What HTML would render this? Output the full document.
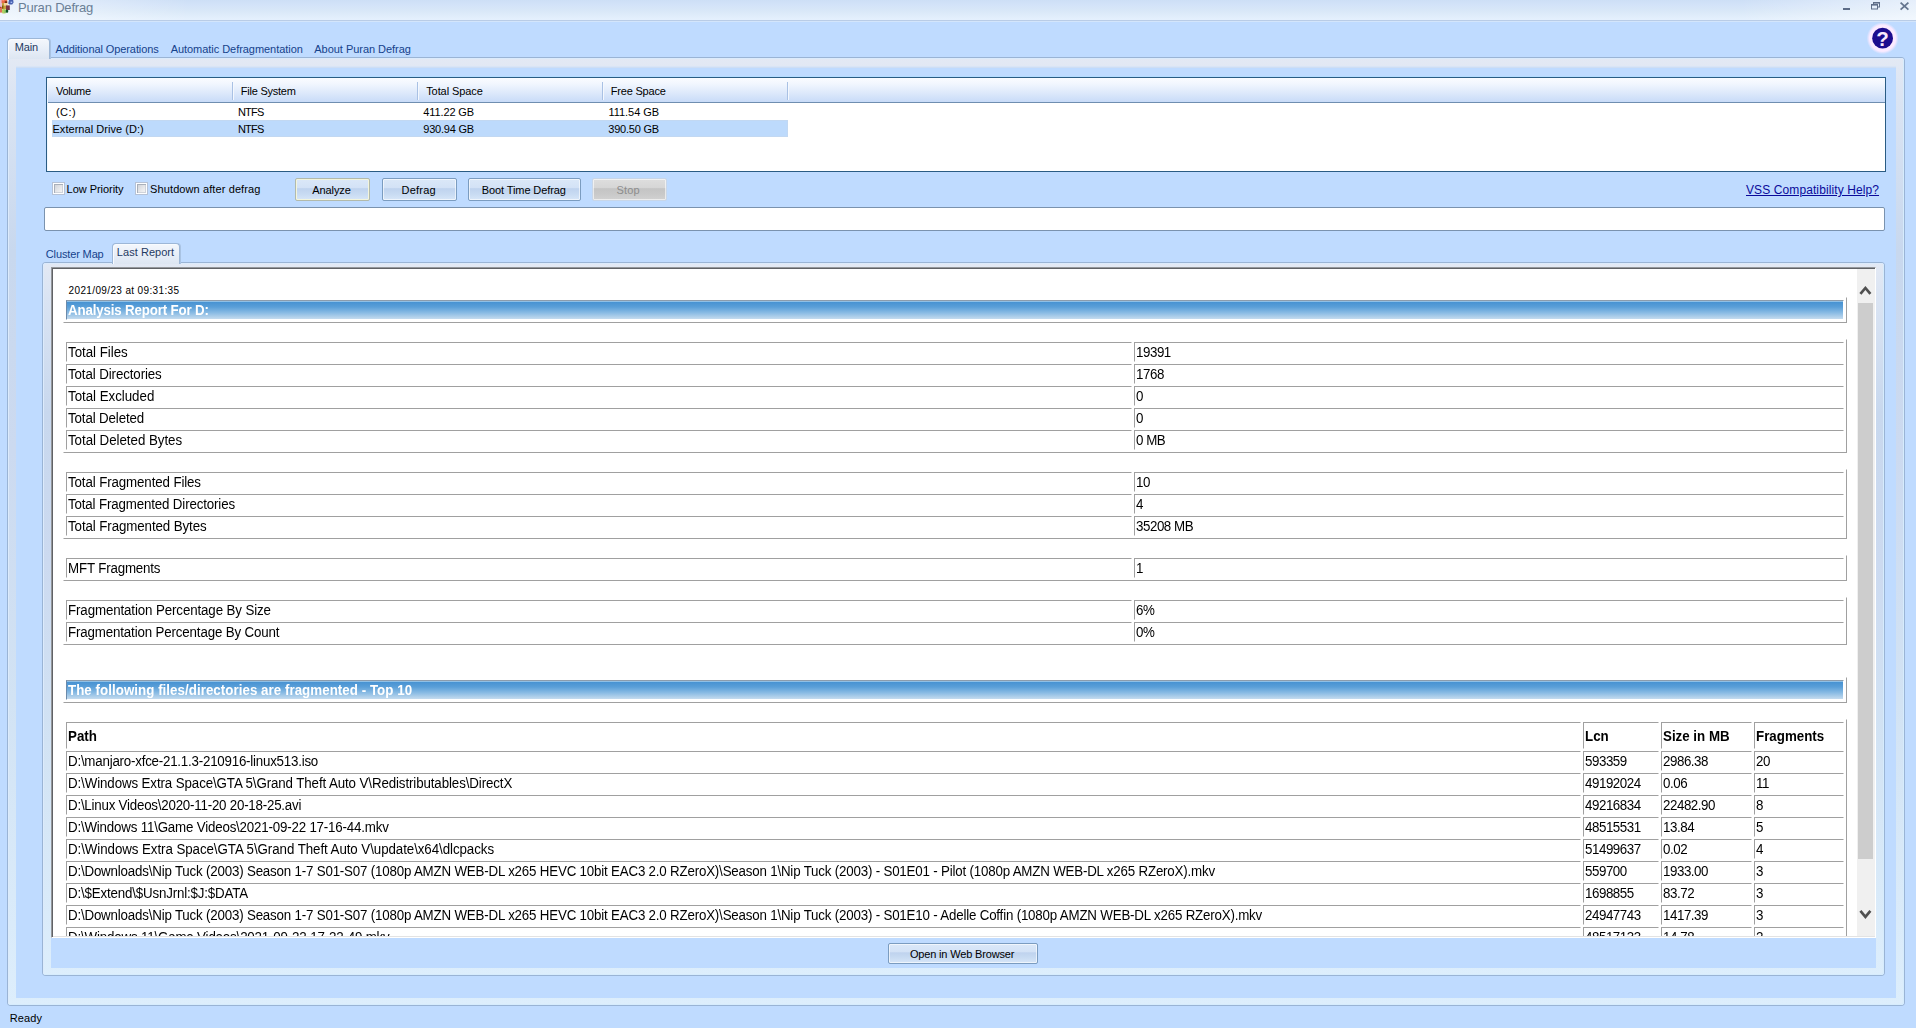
<!DOCTYPE html>
<html>
<head>
<meta charset="utf-8">
<title>Puran Defrag</title>
<style>
*{box-sizing:border-box;margin:0;padding:0}
html,body{width:1916px;height:1028px;overflow:hidden;background:#bfdbff}
body{position:relative;font-family:"Liberation Sans",sans-serif;font-size:11px;color:#000}
.abs{position:absolute}
.ui{font-family:"Liberation Sans",sans-serif;font-size:11px;white-space:nowrap;line-height:13px}
#titlebar{left:0;top:0;width:1916px;height:22px;background-repeat:no-repeat;background-size:100% 20px,100% 100%;background-image:
 linear-gradient(90deg,rgba(255,255,255,.55) 0,rgba(255,255,255,0) 190px,rgba(255,255,255,0) 1740px,rgba(255,255,255,.5) 1916px),
 linear-gradient(#cddff6 0,#d3e3f9 5px,#d9e8f8 11px,#e3effc 18px,#e4f0fe 20px,#b9cce6 20px,#b9cce6 21px,#d3e5fb 21px,#d3e5fb 22px)}
/* main tab panel */
#mainpanel{left:8px;top:58px;width:1896px;height:947px;border-radius:3px;background:linear-gradient(#e3e9f4 0,#dae4f3 43px,#c8d8ee 193px,#ccdaf0 393px,#d2e3f4 643px,#ddeefc 949px);box-shadow:inset 1px 1px 0 #dcebfc,inset -1px -1px 0 #d6ecfd,0 0 0 1px #9ab4d5}
#maininner{left:16px;top:68px;width:1880px;height:930px;background:#bfdbff;box-shadow:0 -1px 0 #cedef4,0 -2px 0 #d8e5f7}
.tabsel{background:linear-gradient(#f4f7fc 0,#e6edf7 60%,#dde6f2 100%);border:1px solid #9db7d7;border-bottom:none;border-radius:4px 4px 0 0;box-shadow:inset 1px 1px 0 #f8fbff,1px 0 0 #a9c3e3}
/* list view */
#list{left:46px;top:77px;width:1840px;height:95px;background:#fff;border:1px solid #2a5c84;box-shadow:inset 1px 1px 0 #f2f8ff,0 -1px 0 #b4dcff}
#listhead{left:48px;top:78px;width:1837px;height:25px;background:linear-gradient(#fafcff 0,#f1f6fe 6px,#dde9fb 15px,#c8dbf8 24px);border-bottom:1px solid #6f8eb0}
.colsep{top:82px;width:1px;height:18px;background:#a9c1e4;box-shadow:1px 0 0 #f4f8fe}
#selrow{left:52px;top:120px;width:736px;height:17px;background:#bddafc;box-shadow:inset 0 0 0 1px #c2d8f2}
/* buttons */
.btn{height:21px;border:1px solid #7b9cc0;border-radius:2px;background:linear-gradient(#dbe8f8 0,#d3e2f6 42%,#bfd3ee 46%,#c8dbf2 72%,#d7e6f8 100%);box-shadow:inset 0 0 0 1px rgba(255,255,255,.6)}
.chk{width:13px;height:13px;border:1px solid #b6c2d6;background:#fdfeff}
.chk::after{content:"";position:absolute;left:1px;top:1px;width:9px;height:9px;background:linear-gradient(135deg,#cdd0d6 0,#e6e7ea 55%,#f8f8f8 100%);box-shadow:inset 1px 1px 0 #a9b0bb,inset -1px -1px 0 #cfd3da}
#progress{left:44px;top:207px;width:1841px;height:24px;background:#fff;border:1px solid #7a92ae;border-radius:2px}
#subpanel{left:43px;top:263px;width:1841px;height:712px;background:linear-gradient(#e3e9f4 0,#dae4f3 35px,#c8d8ee 150px,#ccdaf0 300px,#d2e3f4 480px,#ddeefc 714px);border-radius:3px;box-shadow:inset 1px 1px 0 #dcebfc,inset -1px -1px 0 #d6ecfd,0 0 0 1px #9ab4d5}
#subbar{left:51px;top:937px;width:1825px;height:31px;background:#bfdbff}
#browser{left:51px;top:267px;width:1825px;height:671px;background:#fff;border-top:1px solid #94979b;border-left:1px solid #94979b;border-right:1px solid #fff;border-bottom:1px solid #fff;box-shadow:inset 1px 1px 0 #606266,inset -1px -1px 0 #e3e3e3;overflow:hidden}
/* scrollbar */
#sbar{left:1857px;top:269px;width:18px;height:667px;background:#f0f0f0}
#sthumb{left:1858px;top:303px;width:15px;height:556px;background:#cdcdcd}
/* report */
#doc{left:54px;top:270px;width:1803px;height:666px;overflow:hidden;font-family:"Liberation Sans",sans-serif;font-size:13px}
table.r{position:absolute;left:9px;width:1784px;border-collapse:separate;border-spacing:2px;border:1px solid;border-color:#fff #a0a0a0 #a0a0a0 #fff;table-layout:fixed}
table.r td{border:1px solid;border-color:#a0a0a0 #fff #fff #a0a0a0;height:20px;padding:1px 0 0 1px;font-size:13.33px;letter-spacing:-.17px;line-height:17px;white-space:nowrap;overflow:hidden;vertical-align:middle}
table.r td+td{letter-spacing:-.45px}
table.r td.h{background:linear-gradient(#8fc0e6 0,#8fc0e6 1px,#4792d2 1px,#5a9fd8 6px,#8bbce4 12px,#c4dbee 18px);border-top-color:#8c9cac;border-left-color:#6c8aaa;color:#fff;font-weight:bold;height:20px;font-size:13.33px;letter-spacing:0}
span.t{display:inline-block;transform:scaleY(1.1);transform-origin:0 76%}
table.r td.b{font-weight:bold;height:27px;font-size:13.33px;letter-spacing:0}
</style>
</head>
<body>
<div id="titlebar" class="abs"></div>
<svg class="abs" style="left:0;top:0" width="16" height="16" viewBox="0 0 16 16">
 <defs><filter id="ib" x="-20%" y="-20%" width="140%" height="140%"><feGaussianBlur stdDeviation="0.45"/></filter></defs>
 <g filter="url(#ib)">
 <rect x="-1" y="-1" width="3.2" height="8.4" fill="#e6bcd4"/>
 <rect x="1.6" y="-1" width="5.6" height="4.2" fill="#ea6a48"/>
 <rect x="2.2" y="-1" width="2" height="1.6" fill="#ff9484"/>
 <rect x="4.8" y="1.2" width="2.4" height="1.8" fill="#7a2c10"/>
 <rect x="-1" y="7" width="3" height="5.6" fill="#e07058"/>
 <rect x="-1" y="6.8" width="2.2" height="1" fill="#a03028"/>
 <rect x="2" y="3" width="4.6" height="6" fill="#c4a040"/>
 <rect x="4" y="3" width="3.6" height="2.6" fill="#f4d4a0"/>
 <rect x="2" y="5.6" width="1.4" height="3" fill="#7a5a10"/>
 <rect x="6" y="5.4" width="3.8" height="4.6" fill="#7c3444"/>
 <rect x="2" y="9" width="4" height="4.4" rx="1" fill="#b4d062"/>
 <rect x="4" y="10" width="2" height="3" fill="#94c868"/>
 <rect x="5.8" y="9.8" width="2.4" height="3" rx="1" fill="#0c5422"/>
 <path d="M9.2 -1 L13 -1 L13.6 2.6 L12.2 4.6 L9.6 4.4 L8.2 3.4 Z" fill="#4660b0"/>
 <rect x="10.6" y="1.6" width="1.6" height="1.4" fill="#a8bcf4"/>
 </g>
</svg>
<!-- window buttons -->
<svg class="abs" style="left:1836px;top:0" width="80" height="20" viewBox="0 0 80 20">
 <rect x="7" y="8" width="7" height="2" fill="#5d6d88"/>
 <g fill="none" stroke="#5d6d88" stroke-width="1">
  <rect x="37.5" y="2.5" width="6" height="4.5"/>
  <rect x="35.5" y="4.5" width="6" height="4.5" fill="#e3eefb"/>
 </g>
 <rect x="37" y="2" width="7" height="1.6" fill="#5d6d88"/>
 <rect x="35" y="4" width="7" height="1.6" fill="#5d6d88"/>
 <path d="M64.6 2.6 L72.4 9.6 M72.4 2.6 L64.6 9.6" stroke="#65758f" stroke-width="1.8" fill="none"/>
</svg>
<!-- help icon -->
<svg class="abs" style="left:1864px;top:20px" width="38" height="38" viewBox="0 0 38 38">
 <defs><radialGradient id="hg" cx="50%" cy="50%" r="50%"><stop offset="0" stop-color="#fdf0ff"/><stop offset=".82" stop-color="#fbeaff"/><stop offset="1" stop-color="#f4e8ff" stop-opacity="0"/></radialGradient></defs>
 <circle cx="18.6" cy="18.2" r="16" fill="url(#hg)"/>
 <circle cx="18.6" cy="18.2" r="10.4" fill="#1c0c8e"/>
 <text x="18.6" y="25.8" text-anchor="middle" font-family="Liberation Sans, sans-serif" font-weight="bold" font-size="20.5" fill="#f9e8fc">?</text>
</svg>

<div id="mainpanel" class="abs"></div>
<div id="maininner" class="abs"></div>
<div class="abs tabsel" style="left:7px;top:38px;width:43px;height:21px"></div>

<div id="list" class="abs"></div>
<div id="listhead" class="abs"></div>
<div class="abs colsep" style="left:232px"></div>
<div class="abs colsep" style="left:417px"></div>
<div class="abs colsep" style="left:602px"></div>
<div class="abs colsep" style="left:787px"></div>
<div id="selrow" class="abs"></div>

<div class="abs chk" style="left:52px;top:182px"></div>
<div class="abs chk" style="left:135px;top:182px"></div>
<div class="abs btn" style="left:295px;top:178px;height:23px;width:75px;border:1px solid #b2baac;box-shadow:inset 0 0 0 1px #f3f5dc"></div>
<div class="abs btn" style="left:382px;top:178px;height:23px;width:75px"></div>
<div class="abs btn" style="left:468px;top:178px;height:23px;width:113px"></div>
<div class="abs btn" style="left:592px;top:178px;height:23px;width:75px;background:linear-gradient(#dedede 0,#d6d6d6 42%,#c4c4c4 46%,#c9c9c9 72%,#d2d2d2 100%);border-color:#c8d6e8"></div>
<div class="abs" style="left:1746px;top:183px;font-size:12px;letter-spacing:.1px;line-height:14px;color:#0a0a9a;text-decoration:underline;white-space:nowrap">VSS Compatibility Help?</div>
<div id="progress" class="abs"></div>

<div id="subpanel" class="abs"></div>
<div class="abs tabsel" style="left:112px;top:243px;width:68px;height:21px"></div>
<div id="subbar" class="abs"></div>
<div id="browser" class="abs"></div>
<div id="sbar" class="abs"></div>
<div id="sthumb" class="abs"></div>
<svg class="abs" style="left:1857px;top:280px" width="18" height="20" viewBox="0 0 18 20"><path d="M3.4 13.9 L8.4 8 L13.4 13.9" fill="none" stroke="#505050" stroke-width="2.7"/></svg>
<svg class="abs" style="left:1857px;top:904px" width="18" height="20" viewBox="0 0 18 20"><path d="M3.4 6.9 L8.4 12.8 L13.4 6.9" fill="none" stroke="#505050" stroke-width="2.7"/></svg>

<div id="doc" class="abs">
<div class="abs" style="left:14.6px;top:14px;font-size:10px;letter-spacing:.36px;line-height:14px;white-space:nowrap">2021/09/23 at 09:31:35</div>
<table class="r" style="top:27px"><tr><td class="h" style="letter-spacing:-.17px"><span class="t">Analysis Report For D:</span></td></tr></table>
<table class="r" style="top:69px"><colgroup><col style="width:1066px"><col></colgroup>
<tr><td style="letter-spacing:-0.03px"><span class="t">Total Files</span></td><td><span class="t">19391</span></td></tr>
<tr><td style="letter-spacing:-0.11px"><span class="t">Total Directories</span></td><td><span class="t">1768</span></td></tr>
<tr><td style="letter-spacing:-0.03px"><span class="t">Total Excluded</span></td><td><span class="t">0</span></td></tr>
<tr><td style="letter-spacing:-0.13px"><span class="t">Total Deleted</span></td><td><span class="t">0</span></td></tr>
<tr><td style="letter-spacing:-0.04px"><span class="t">Total Deleted Bytes</span></td><td><span class="t">0 MB</span></td></tr>
</table>
<table class="r" style="top:199px"><colgroup><col style="width:1066px"><col></colgroup>
<tr><td style="letter-spacing:-0.12px"><span class="t">Total Fragmented Files</span></td><td><span class="t">10</span></td></tr>
<tr><td style="letter-spacing:-0.15px"><span class="t">Total Fragmented Directories</span></td><td><span class="t">4</span></td></tr>
<tr><td style="letter-spacing:-0.10px"><span class="t">Total Fragmented Bytes</span></td><td><span class="t">35208 MB</span></td></tr>
</table>
<table class="r" style="top:285px"><colgroup><col style="width:1066px"><col></colgroup>
<tr><td><span class="t">MFT Fragments</span></td><td><span class="t">1</span></td></tr>
</table>
<table class="r" style="top:327px"><colgroup><col style="width:1066px"><col></colgroup>
<tr><td style="letter-spacing:-0.12px"><span class="t">Fragmentation Percentage By Size</span></td><td><span class="t">6%</span></td></tr>
<tr><td style="letter-spacing:-0.15px"><span class="t">Fragmentation Percentage By Count</span></td><td><span class="t">0%</span></td></tr>
</table>
<table class="r" style="top:407px"><tr><td class="h" style="letter-spacing:0.04px"><span class="t">The following files/directories are fragmented - Top 10</span></td></tr></table>
<table class="r" style="top:449px"><colgroup><col><col style="width:76px"><col style="width:91px"><col style="width:90px"></colgroup>
<tr><td class="b"><span class="t">Path</span></td><td class="b"><span class="t">Lcn</span></td><td class="b"><span class="t">Size in MB</span></td><td class="b"><span class="t">Fragments</span></td></tr>
<tr><td style="letter-spacing:-0.22px"><span class="t">D:\manjaro-xfce-21.1.3-210916-linux513.iso</span></td><td><span class="t">593359</span></td><td><span class="t">2986.38</span></td><td><span class="t">20</span></td></tr>
<tr><td style="letter-spacing:-.11px"><span class="t">D:\Windows Extra Space\GTA 5\Grand Theft Auto V\Redistributables\DirectX</span></td><td><span class="t">49192024</span></td><td><span class="t">0.06</span></td><td><span class="t">11</span></td></tr>
<tr><td style="letter-spacing:-0.22px"><span class="t">D:\Linux Videos\2020-11-20 20-18-25.avi</span></td><td><span class="t">49216834</span></td><td><span class="t">22482.90</span></td><td><span class="t">8</span></td></tr>
<tr><td style="letter-spacing:-0.19px"><span class="t">D:\Windows 11\Game Videos\2021-09-22 17-16-44.mkv</span></td><td><span class="t">48515531</span></td><td><span class="t">13.84</span></td><td><span class="t">5</span></td></tr>
<tr><td style="letter-spacing:-0.07px"><span class="t">D:\Windows Extra Space\GTA 5\Grand Theft Auto V\update\x64\dlcpacks</span></td><td><span class="t">51499637</span></td><td><span class="t">0.02</span></td><td><span class="t">4</span></td></tr>
<tr><td style="letter-spacing:-.19px"><span class="t">D:\Downloads\Nip Tuck (2003) Season 1-7 S01-S07 (1080p AMZN WEB-DL x265 HEVC 10bit EAC3 2.0 RZeroX)\Season 1\Nip Tuck (2003) - S01E01 - Pilot (1080p AMZN WEB-DL x265 RZeroX).mkv</span></td><td><span class="t">559700</span></td><td><span class="t">1933.00</span></td><td><span class="t">3</span></td></tr>
<tr><td><span class="t">D:\$Extend\$UsnJrnl:$J:$DATA</span></td><td><span class="t">1698855</span></td><td><span class="t">83.72</span></td><td><span class="t">3</span></td></tr>
<tr><td style="letter-spacing:-.19px"><span class="t">D:\Downloads\Nip Tuck (2003) Season 1-7 S01-S07 (1080p AMZN WEB-DL x265 HEVC 10bit EAC3 2.0 RZeroX)\Season 1\Nip Tuck (2003) - S01E10 - Adelle Coffin (1080p AMZN WEB-DL x265 RZeroX).mkv</span></td><td><span class="t">24947743</span></td><td><span class="t">1417.39</span></td><td><span class="t">3</span></td></tr>
<tr><td><span class="t">D:\Windows 11\Game Videos\2021-09-22 17-22-49.mkv</span></td><td><span class="t">48517133</span></td><td><span class="t">14.78</span></td><td><span class="t">2</span></td></tr>
<tr><td><span class="t">D:\Windows 11\Game Videos\2021-09-22 17-30-12.mkv</span></td><td><span class="t">48519020</span></td><td><span class="t">9.41</span></td><td><span class="t">2</span></td></tr>
</table>
</div>

<div class="abs btn" style="left:888px;top:943px;width:150px"></div>
<div class="abs ui" style="left:17.9px;top:0px;letter-spacing:-0.177px;font-size:13px;line-height:16px;color:#6a7f96">Puran Defrag</div>
<div class="abs ui" style="left:14.7px;top:41px;letter-spacing:-0.111px;color:#1f3a62">Main</div>
<div class="abs ui" style="left:55.4px;top:43px;letter-spacing:-0.090px;color:#15428b">Additional Operations</div>
<div class="abs ui" style="left:170.7px;top:43px;letter-spacing:-0.048px;color:#15428b">Automatic Defragmentation</div>
<div class="abs ui" style="left:314.3px;top:43px;letter-spacing:-0.035px;color:#15428b">About Puran Defrag</div>
<div class="abs ui" style="left:56.1px;top:85px;letter-spacing:-0.351px;">Volume</div>
<div class="abs ui" style="left:240.8px;top:85px;letter-spacing:-0.234px;">File System</div>
<div class="abs ui" style="left:426.2px;top:85px;letter-spacing:-0.080px;">Total Space</div>
<div class="abs ui" style="left:610.8px;top:85px;letter-spacing:-0.207px;">Free Space</div>
<div class="abs ui" style="left:55.9px;top:106px;letter-spacing:0.468px;">(C:)</div>
<div class="abs ui" style="left:237.9px;top:106px;letter-spacing:-0.784px;">NTFS</div>
<div class="abs ui" style="left:423.3px;top:106px;letter-spacing:-0.120px;">411.22 GB</div>
<div class="abs ui" style="left:608.5px;top:106px;letter-spacing:-0.052px;">111.54 GB</div>
<div class="abs ui" style="left:52.5px;top:123px;letter-spacing:0.038px;">External Drive (D:)</div>
<div class="abs ui" style="left:237.9px;top:123px;letter-spacing:-0.784px;">NTFS</div>
<div class="abs ui" style="left:423.3px;top:123px;letter-spacing:-0.210px;">930.94 GB</div>
<div class="abs ui" style="left:608.3px;top:123px;letter-spacing:-0.210px;">390.50 GB</div>
<div class="abs ui" style="left:66.6px;top:183px;letter-spacing:-0.047px;">Low Priority</div>
<div class="abs ui" style="left:150.1px;top:183px;letter-spacing:0.102px;">Shutdown after defrag</div>
<div class="abs ui" style="left:312.2px;top:184px;letter-spacing:-0.077px;">Analyze</div>
<div class="abs ui" style="left:401.5px;top:184px;letter-spacing:0.245px;">Defrag</div>
<div class="abs ui" style="left:481.8px;top:184px;letter-spacing:-0.100px;">Boot Time Defrag</div>
<div class="abs ui" style="left:616.5px;top:184px;letter-spacing:0.140px;color:#8d8d8d">Stop</div>
<div class="abs ui" style="left:45.8px;top:248px;letter-spacing:-0.136px;color:#15428b">Cluster Map</div>
<div class="abs ui" style="left:116.8px;top:246px;letter-spacing:0.048px;color:#1f3a62">Last Report</div>
<div class="abs ui" style="left:909.9px;top:948px;letter-spacing:-0.158px;">Open in Web Browser</div>
<div class="abs ui" style="left:9.8px;top:1012px;letter-spacing:0.101px;">Ready</div>
</body>
</html>
